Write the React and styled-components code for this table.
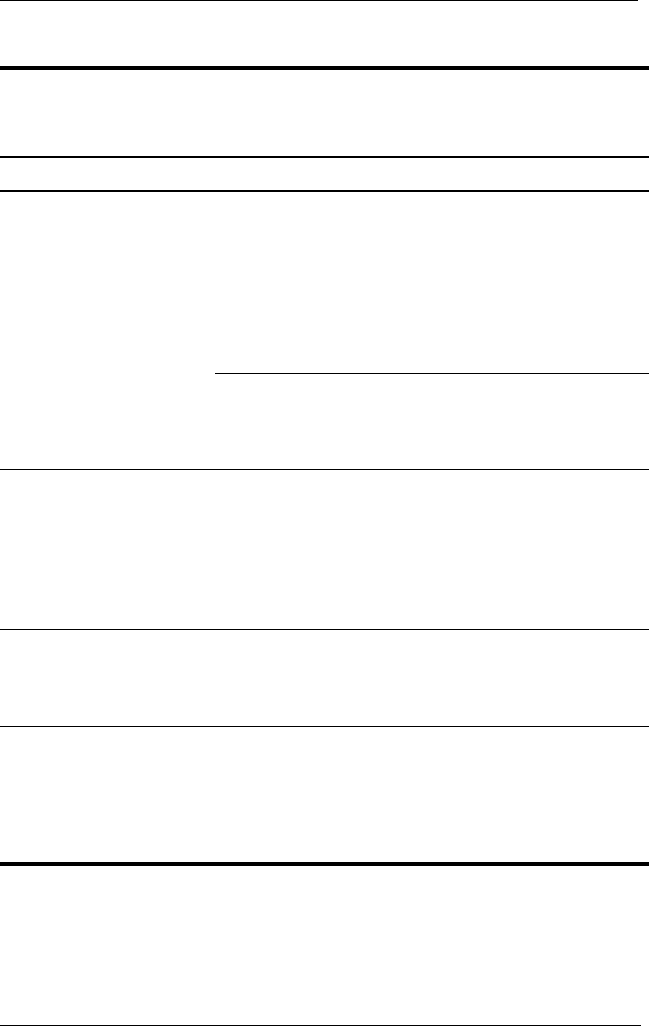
import React from "react";
import styled, { createGlobalStyle } from "styled-components";

const GlobalStyle = createGlobalStyle`
  html, body {
    margin: 0;
    padding: 0;
    background: #ffffff;
  }
  body {
    font-family: "Liberation Serif", "Times New Roman", serif;
    color: #000;
  }
`;

const Page = styled.div`
  width: 649px;
  display: flex;
  flex-direction: column;
`;

const EdgeRule = styled.div`
  height: 1px;
  width: ${(props) => props.$width}px;
  background: #000;
`;

const Row = styled.div`
  display: grid;
  grid-template-columns: 215px 1fr;
  height: ${(props) => props.$height}px;
  border-bottom: ${(props) => props.$rule}px solid #000;
`;

const Cell = styled.div`
  font-size: 13px;
  line-height: 1.3;
  padding: 6px 8px;
`;

const Stack = styled.div`
  display: flex;
  flex-direction: column;
`;

const SubRow = styled.div`
  height: ${(props) => props.$height}px;
  border-bottom: ${(props) => (props.$rule ? "1px solid #000" : "none")};
`;

const rows = [
  { height: 65, rule: 4 },
  { height: 86, rule: 2 },
  { height: 32, rule: 2 },
];

const lowerRows = [
  { height: 159, rule: 1 },
  { height: 96, rule: 1 },
  { height: 135, rule: 4 },
  { height: 159, rule: 0 },
];

function App() {
  return (
    <Page>
      <GlobalStyle />
      <EdgeRule $width={638} />
      {rows.map((row, index) => (
        <Row key={index} $height={row.height} $rule={row.rule}>
          <Cell />
          <Cell />
        </Row>
      ))}
      <Row $height={277} $rule={1}>
        <Cell />
        <Stack>
          <SubRow $height={181} $rule />
          <SubRow $height={96} />
        </Stack>
      </Row>
      {lowerRows.map((row, index) => (
        <Row key={index} $height={row.height} $rule={row.rule}>
          <Cell />
          <Cell />
        </Row>
      ))}
      <EdgeRule $width={641} />
    </Page>
  );
}

export default App;
